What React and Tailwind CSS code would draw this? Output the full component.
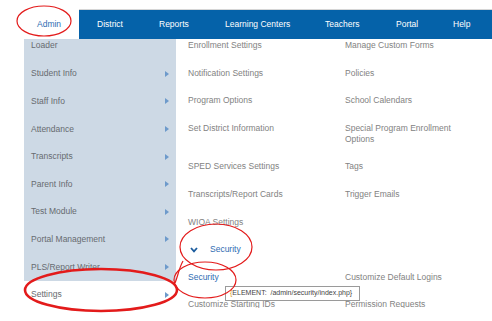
const NAV = [
  { label: 'District', w: 'w-[62px]' },
  { label: 'Reports', w: 'w-[66px]' },
  { label: 'Learning Centers', w: 'w-[100px]' },
  { label: 'Teachers', w: 'w-[71px]' },
  { label: 'Portal', w: 'w-[57px]' },
  { label: 'Help', w: 'w-[30px]' },
]

const SIDE = [
  'Student Info',
  'Staff Info',
  'Attendance',
  'Transcripts',
  'Parent Info',
  'Test Module',
  'Portal Management',
  'PLS/Report Writer',
]

function Arrow() {
  return (
    <svg width="4" height="6" viewBox="0 0 4 6" className="mr-[7px]">
      <path d="M0 0 L4 3 L0 6 Z" fill="#6d9acb" />
    </svg>
  )
}

function Row({ left, right }) {
  return (
    <>
      <div className="pt-[1px] pb-[15.6px]">{left}</div>
      <div className="pt-[1px] pb-[15.6px]">{right}</div>
    </>
  )
}

export default function App() {
  return (
    <div className="relative h-[321px] w-[492px] overflow-hidden bg-white font-['Liberation_Sans',Arial,sans-serif]">
      <header className="flex pt-[9px]">
        <div className="flex h-[30px] w-[79px] items-center pl-[37px] text-[8.5px] text-[#2f6db3]">
          Admin
        </div>
        <nav className="flex h-[30px] flex-1 items-center border-t border-[#d6d6d6] bg-[#0562a9] pl-[18px] text-[8.5px] text-white">
          {NAV.map((n) => (
            <div className={n.w} key={n.label}>
              {n.label}
            </div>
          ))}
        </nav>
      </header>

      <div className="flex h-[269px] overflow-hidden">
        <aside className="ml-[24px] w-[152px] shrink-0 text-[8.5px] text-[#676b70]">
          <div className="bg-[#cdd9e5]">
            <div className="h-[21px] pl-[7px] leading-[12px]">Loader</div>
            {SIDE.map((s) => (
              <div className="flex h-[27.6px] items-center justify-between pl-[7px]" key={s}>
                <span>{s}</span>
                <Arrow />
              </div>
            ))}
          </div>
          <div className="flex h-[27.6px] items-center justify-between pl-[7px]">
            <span>Settings</span>
            <Arrow />
          </div>
        </aside>

        <main className="grid flex-1 grid-cols-[157px_1fr] content-start pl-[12px] text-[8.5px] leading-[11px] text-[#828282]">
          <Row left="Enrollment Settings" right="Manage Custom Forms" />
          <Row left="Notification Settings" right="Policies" />
          <Row left="Program Options" right="School Calendars" />
          <Row
            left="Set District Information"
            right={
              <span>
                Special Program Enrollment
                <br />
                Options
              </span>
            }
          />
          <Row left="SPED Services Settings" right="Tags" />
          <Row left="Transcripts/Report Cards" right="Trigger Emails" />
          <Row left="WIOA Settings" right="" />
          <Row
            left={
              <span className="flex items-center text-[#2f6db3]">
                <svg width="8" height="6" viewBox="0 0 8 6" className="ml-[2px] mr-[12px]">
                  <path d="M1 1 L4 4.3 L7 1" fill="none" stroke="#1c5c9e" strokeWidth="1.8" />
                </svg>
                Security
              </span>
            }
            right=""
          />
          <Row left={<span className="text-[#2f6db3]">Security</span>} right="Customize Default Logins" />
          <Row left="Customize Starting IDs" right="Permission Requests" />
        </main>
      </div>

      <div className="absolute left-[225px] top-[286px] flex h-[15px] w-[135px] items-center whitespace-nowrap border border-[#9a9a9a] bg-white pl-[4px] text-[7px] text-[#444]">
        <span className="text-[#d59a1c]">{'{'}</span>ELEMENT:&nbsp;&nbsp;/admin/security/index.php{'}'}
      </div>

      <svg className="pointer-events-none absolute inset-0" width="492" height="321">
        <ellipse cx="44" cy="21" rx="27" ry="15" fill="none" stroke="#e31b1b" strokeWidth="1.2" />
        <ellipse cx="216" cy="247" rx="36" ry="23" fill="none" stroke="#e31b1b" strokeWidth="1.2" />
        <ellipse cx="205" cy="280" rx="31" ry="18" fill="none" stroke="#e31b1b" strokeWidth="1.2" />
        <ellipse cx="101" cy="290" rx="76" ry="21" fill="none" stroke="#e31b1b" strokeWidth="2.6" />
        <path d="M175 283 C178 276 179 268 183 261" fill="none" stroke="#e31b1b" strokeWidth="1.2" />
      </svg>
    </div>
  )
}
